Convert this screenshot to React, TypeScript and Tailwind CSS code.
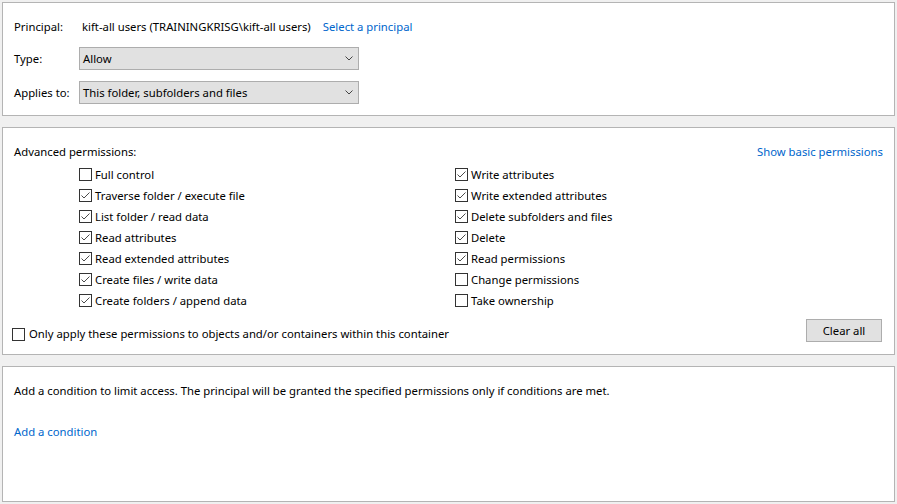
import React from "react";

const left = [
  { label: "Full control", on: false },
  { label: "Traverse folder / execute file", on: true },
  { label: "List folder / read data", on: true },
  { label: "Read attributes", on: true },
  { label: "Read extended attributes", on: true },
  { label: "Create files / write data", on: true },
  { label: "Create folders / append data", on: true },
];

const right = [
  { label: "Write attributes", on: true },
  { label: "Write extended attributes", on: true },
  { label: "Delete subfolders and files", on: true },
  { label: "Delete", on: true },
  { label: "Read permissions", on: true },
  { label: "Change permissions", on: false },
  { label: "Take ownership", on: false },
];

function Box({ on }: { on: boolean }) {
  return (
    <span className="flex h-[13px] w-[13px] shrink-0 items-center justify-center border border-[#333333] bg-white">
      {on && (
        <svg width="11" height="11" viewBox="0 0 11 11" fill="none">
          <path d="M1.5 5.5 L4 8 L9.5 2.5" stroke="#4a4a4a" strokeWidth="1" />
        </svg>
      )}
    </span>
  );
}

function Check({ label, on }: { label: string; on: boolean }) {
  return (
    <div className="flex h-[21px] items-center gap-[3px]">
      <Box on={on} />
      <span>{label}</span>
    </div>
  );
}

function Dropdown({ value }: { value: string }) {
  return (
    <div className="flex h-[23px] w-[280px] items-center justify-between border border-[#adadad] bg-[#e1e1e1] pl-[3px] pr-[5px]">
      <span>{value}</span>
      <svg width="8" height="5" viewBox="0 0 8 5" fill="none">
        <path d="M0.5 0.5 L4 4 L7.5 0.5" stroke="#444" strokeWidth="1" />
      </svg>
    </div>
  );
}

export default function App() {
  return (
    <div
      className="flex h-[504px] w-[897px] flex-col gap-[11px] bg-[#f0f0f0] p-[2px] text-[11.3px] leading-[16px] text-black"
      style={{ fontFamily: '"Noto Sans", sans-serif' }}
    >
      <section className="h-[114px] border border-[#b4b4b4] bg-white px-[11px] pt-[16px]">
        <div className="flex h-[16px] items-center">
          <span className="w-[68px]">Principal:</span>
          <span>kift-all users (TRAININGKRISG\kift-all users)</span>
          <span className="ml-[12px] text-[#0066cc]">Select a principal</span>
        </div>
        <div className="mt-[12px] flex items-center">
          <span className="w-[65px]">Type:</span>
          <Dropdown value="Allow" />
        </div>
        <div className="mt-[11px] flex items-center">
          <span className="w-[65px]">Applies to:</span>
          <Dropdown value="This folder, subfolders and files" />
        </div>
      </section>

      <section className="flex h-[228px] flex-col border border-[#b4b4b4] bg-white px-[11px] pt-[16px]">
        <div className="flex h-[16px] items-center justify-between">
          <span>Advanced permissions:</span>
          <span className="text-[#0066cc]">Show basic permissions</span>
        </div>
        <div className="mt-[4px] ml-[65px] grid grid-cols-[376px_1fr]">
          <div className="flex flex-col">
            {left.map((p) => (
              <Check key={p.label} {...p} />
            ))}
          </div>
          <div className="flex flex-col">
            {right.map((p) => (
              <Check key={p.label} {...p} />
            ))}
          </div>
        </div>
        <div className="mt-[8px] flex items-start justify-between pr-[1px]">
          <div className="-ml-[2px] mt-[7px] flex h-[16px] items-center gap-[4px]">
            <Box on={false} />
            <span>Only apply these permissions to objects and/or containers within this container</span>
          </div>
          <button className="h-[23px] w-[76px] border border-[#adadad] bg-[#e1e1e1] text-center">
            Clear all
          </button>
        </div>
      </section>

      <section className="h-[136px] border border-[#b4b4b4] bg-white px-[11px] pt-[16px]">
        <div className="h-[16px]">
          Add a condition to limit access. The principal will be granted the specified permissions only if conditions are met.
        </div>
        <div className="mt-[25px] h-[16px] text-[#0066cc]">Add a condition</div>
      </section>
    </div>
  );
}
